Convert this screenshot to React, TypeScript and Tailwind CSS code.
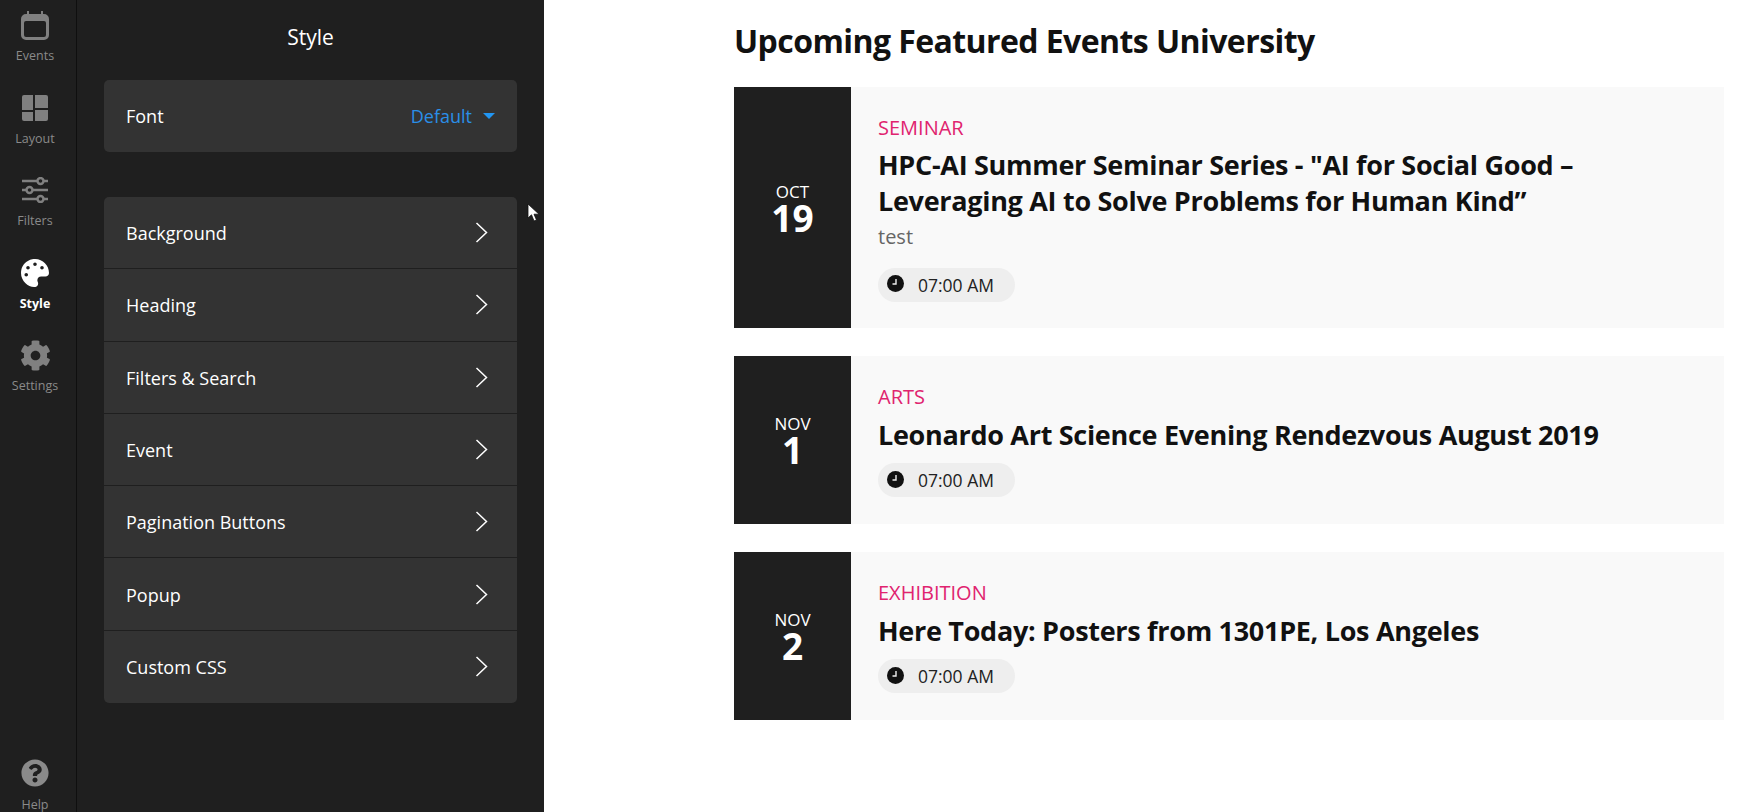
import { FaCog, FaPalette, FaQuestionCircle } from "react-icons/fa";

const font = { fontFamily: '"Open Sans", "Noto Sans", sans-serif' };

function CalendarIcon() {
  return (
    <svg width="28" height="29" viewBox="0 0 28 29" fill="none">
      <path d="M6 0h2v3h12V0h2v3h1a5 5 0 0 1 5 5v16a5 5 0 0 1-5 5H5a5 5 0 0 1-5-5V8a5 5 0 0 1 5-5h1z" fill="#808080" />
      <rect x="3" y="10" width="22" height="16" rx="2" fill="#1f1f1f" />
    </svg>
  );
}

function LayoutIcon() {
  return (
    <svg width="26" height="26" viewBox="0 0 26 26" fill="#808080">
      <path d="M2 0h9v15H0V2a2 2 0 0 1 2-2z" />
      <path d="M13 0h11a2 2 0 0 1 2 2v11H13z" />
      <path d="M0 17h11v9H2a2 2 0 0 1-2-2z" />
      <path d="M13 15h13v9a2 2 0 0 1-2 2H13z" />
    </svg>
  );
}

function SlidersIcon() {
  return (
    <svg width="26" height="26" viewBox="0 0 26 26" fill="none" stroke="#808080">
      <path d="M0 4h15M22 4h4M0 13h4M11 13h15M0 22h15M22 22h4" strokeWidth="2.4" />
      <circle cx="18.5" cy="4" r="3" strokeWidth="2.4" />
      <circle cx="7.5" cy="13" r="3" strokeWidth="2.4" />
      <circle cx="18.5" cy="22" r="3" strokeWidth="2.4" />
    </svg>
  );
}

function ClockIcon() {
  return (
    <svg width="17" height="17" viewBox="0 0 17 17" className="-mt-[2px] shrink-0">
      <circle cx="8.5" cy="8.5" r="8.5" fill="#111111" />
      <path d="M9 4v5H5.5" fill="none" stroke="#eeeeee" strokeWidth="1.4" />
    </svg>
  );
}

function Chevron() {
  return (
    <svg width="13" height="21" viewBox="0 0 13 21" fill="none" stroke="#ffffff" strokeWidth="1.5">
      <path d="M1.5 1l10 9.5-10 9.5" />
    </svg>
  );
}

function NavItem({ label, icon, active }: { label: string; icon: React.ReactNode; active?: boolean }) {
  return (
    <div className="flex h-[82.5px] flex-col items-center">
      <div className="flex h-[34px] items-center justify-center">{icon}</div>
      <span className={`mt-[6px] text-[12.5px] leading-[16px] ${active ? "font-bold text-white" : "text-[#8a8a8a]"}`}>
        {label}
      </span>
    </div>
  );
}

const menuItems = ["Background", "Heading", "Filters & Search", "Event", "Pagination Buttons", "Popup", "Custom CSS"];

const events = [
  {
    month: "OCT",
    day: "19",
    category: "SEMINAR",
    title: "HPC-AI Summer Seminar Series - \"AI for Social Good – Leveraging AI to Solve Problems for Human Kind”",
    desc: "test",
    height: "h-[241px]",
  },
  { month: "NOV", day: "1", category: "ARTS", title: "Leonardo Art Science Evening Rendezvous August 2019", height: "h-[168px]" },
  { month: "NOV", day: "2", category: "EXHIBITION", title: "Here Today: Posters from 1301PE, Los Angeles", height: "h-[168px]" },
];

function EventCard({ event }: { event: (typeof events)[number] }) {
  return (
    <div className={`flex ${event.height} bg-[#f9f9f9]`}>
      <div className="flex w-[117px] shrink-0 flex-col items-center justify-center bg-[#1f1f1f] text-white">
        <span className="text-[17px] leading-[20px]">{event.month}</span>
        <span className="text-[37px] font-bold leading-[32px]">{event.day}</span>
      </div>
      <div className="flex flex-col justify-center pl-[27px]">
        <div className="text-[20px] leading-[28px] text-[#e0246f]">{event.category}</div>
        <div
          className={`${event.desc ? "mt-[5px]" : "mt-[6px]"} max-w-[800px] text-[27px] font-bold leading-[36px] tracking-[-0.3px] text-[#111111]`}
        >
          {event.title}
        </div>
        {event.desc && <div className="mt-[4px] text-[20px] leading-[28px] text-[#666666]">{event.desc}</div>}
        <div
          className={`${event.desc ? "mt-[17px]" : "mt-[10px]"} flex h-[34px] w-[137px] items-center rounded-full bg-[#eeeeee] pl-[9px] text-[#222222]`}
        >
          <ClockIcon />
          <span className="ml-[14px] pt-[1px] text-[17.5px]">07:00 AM</span>
        </div>
      </div>
    </div>
  );
}

export default function App() {
  return (
    <div className="relative flex h-[812px] overflow-hidden bg-white" style={font}>
      {/* Icon rail */}
      <aside className="flex w-[77px] shrink-0 flex-col border-r border-[#0f0f0f] bg-[#1f1f1f] pt-[8px] pr-[6px]">
        <NavItem label="Events" icon={<CalendarIcon />} />
        <NavItem label="Layout" icon={<LayoutIcon />} />
        <NavItem label="Filters" icon={<SlidersIcon />} />
        <NavItem label="Style" active icon={<FaPalette size={28} className="text-white" />} />
        <NavItem label="Settings" icon={<FaCog size={31} className="text-[#808080]" />} />
        <div className="mt-auto">
          <div className="flex h-[82.5px] -mb-[26px] flex-col items-center">
            <div className="flex h-[34px] items-center justify-center">
              <FaQuestionCircle size={28} className="text-[#8a8a8a]" />
            </div>
            <span className="mt-[7px] text-[12.5px] leading-[16px] text-[#8a8a8a]">Help</span>
          </div>
        </div>
      </aside>

      {/* Style panel */}
      <div className="w-[467px] shrink-0 bg-[#1f1f1f] px-[27px] text-white">
        <div className="pt-[21px] text-center text-[21px] leading-[32px]">Style</div>
        <div className="mt-[27px] flex h-[72px] items-center justify-between rounded-[5px] bg-[#333333] pl-[22px] pr-[22px] text-[18px]">
          <span>Font</span>
          <span className="flex items-center text-[#2a8fe8]">
            Default
            <svg width="12" height="6" viewBox="0 0 12 6" className="ml-[11px]">
              <path d="M0 0h12L6 6z" fill="#2196f3" />
            </svg>
          </span>
        </div>
        <div className="mt-[45px] overflow-hidden rounded-[5px] bg-[#333333]">
          {menuItems.map((item, i) => (
            <div
              key={item}
              className={`flex h-[72.3px] items-center justify-between pl-[22px] pr-[29px] text-[18px] ${
                i < menuItems.length - 1 ? "border-b border-[#1f1f1f]" : ""
              }`}
            >
              <span className="pt-[2px]">{item}</span>
              <Chevron />
            </div>
          ))}
        </div>
      </div>

      {/* Preview */}
      <main className="flex-1 pl-[190px] pr-[36px]">
        <h1 className="pt-[18px] text-[32px] font-bold leading-[46px] tracking-[-0.57px] text-[#111111]">
          Upcoming Featured Events University
        </h1>
        <div className="mt-[23px] flex flex-col gap-[28px]">
          {events.map((event) => (
            <EventCard key={event.category} event={event} />
          ))}
        </div>
      </main>

      {/* Mouse pointer */}
      <svg width="13" height="20" viewBox="0 0 13 20" className="absolute left-[527px] top-[203px]">
        <path d="M1 1v14l3.5-3.2L7 18l2.5-1-2.5-5.8H12z" fill="#ffffff" stroke="#111111" strokeWidth="0.8" />
      </svg>
    </div>
  );
}
